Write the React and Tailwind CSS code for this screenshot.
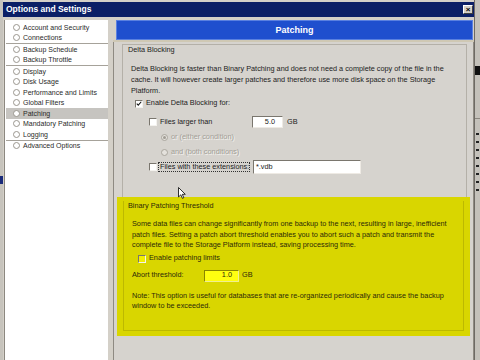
import React from "react";

const sideGroups = [
  ["Account and Security", "Connections"],
  ["Backup Schedule", "Backup Throttle"],
  ["Display", "Disk Usage", "Performance and Limits", "Global Filters", "Patching", "Mandatory Patching", "Logging"],
  ["Advanced Options"],
];

function Check({ checked, yellow }) {
  return (
    <span
      className={`relative inline-block w-[8px] h-[8px] shrink-0 border border-t-[#7a766e] border-l-[#7a766e] border-b-[#f4f2ee] border-r-[#f4f2ee] ${
        yellow ? "bg-[#f2f000]" : "bg-white"
      }`}
    >
      {checked && (
        <svg viewBox="0 0 8 8" className="absolute inset-0 w-full h-full">
          <path d="M1 3.5 L3 5.5 L7 1" fill="none" stroke="#111" strokeWidth="1.4" />
        </svg>
      )}
    </span>
  );
}

function Radio({ checked, dim }) {
  return (
    <span
      className={`relative inline-flex items-center justify-center w-[7px] h-[7px] shrink-0 rounded-full border ${
        dim ? "border-[#aaa69e] bg-[#e4e1dc]" : "border-[#9a968e] bg-white"
      }`}
    >
      {checked && <span className="w-[3px] h-[3px] rounded-full bg-[#a09c94]" />}
    </span>
  );
}

export default function App() {
  return (
    <div className="relative w-[480px] h-[360px] overflow-hidden flex bg-[#b9b6ae] font-['Liberation_Sans',Arial,sans-serif] text-[7px] text-[#1c1c1c]">
      {/* desktop left edge */}
      <div className="w-[3px] shrink-0 flex flex-col bg-[#c7c4bd]">
        <div className="h-[176px]" />
        <div className="h-[8px] bg-[#1a2a7a]" />
      </div>

      {/* dialog */}
      <div className="w-[471px] shrink-0 flex flex-col pt-[2px] bg-[#d4d0c8]">
        {/* title bar */}
        <div className="h-[15px] shrink-0 flex items-center justify-between pl-[3px] pr-[1px] bg-[#0b1f66]">
          <span className="text-white font-bold text-[8.5px] leading-none">Options and Settings</span>
          <span className="w-[10px] h-[9px] flex items-center justify-center bg-[#d4d0c8] border border-t-white border-l-white border-b-[#404040] border-r-[#404040] text-[8px] leading-none font-bold text-black">
            ×
          </span>
        </div>

        {/* body */}
        <div className="flex-1 flex pt-[3px]">
          {/* sidebar */}
          <div className="w-[104px] shrink-0 ml-[1px] bg-white border-l border-[#8c8880] pt-[2px] pl-[1px]">
            {sideGroups.map((group, gi) => (
              <div key={gi} className={gi < sideGroups.length - 1 ? "border-b border-[#a6a29a]" : ""}>
                {group.map((item) => (
                  <div
                    key={item}
                    className={`h-[10.5px] flex items-center gap-[3px] pl-[7px] leading-none ${
                      item === "Patching" ? "bg-[#c6c4c0]" : ""
                    }`}
                  >
                    <Radio />
                    <span className="text-[#2a2a2a]">{item}</span>
                  </div>
                ))}
              </div>
            ))}
          </div>

          {/* right side */}
          <div className="flex-1 flex flex-col ml-[5px] text-[7.3px]">
            <div className="h-[20px] shrink-0 ml-[3px] mr-[1px] flex items-center justify-center bg-[#1f4fce] border border-[#5a80e0]">
              <span className="text-white font-bold text-[9px] leading-none">Patching</span>
            </div>
            <div className="h-[2px] shrink-0 bg-[#cfc8b4]" />

            {/* content panel */}
            <div className="flex-1 flex flex-col border-l border-r border-[#8e8a82] bg-[#d6d3ce]">
              {/* Delta blocking group */}
              <div className="h-[153px] shrink-0 mt-[2px] ml-[8px] mr-[6px] flex flex-col border border-[#b4b0a8] border-b-0">
                <div className="h-[10px] pl-[5px] leading-[10px]">Delta Blocking</div>
                <p className="mt-[8px] pl-[8px] leading-[11px] whitespace-nowrap">
                  Delta Blocking is faster than Binary Patching and does not need a complete copy of the file in the
                  <br />
                  cache. It will however create larger patches and therefore use more disk space on the Storage
                  <br />
                  Platform.
                </p>
                <div className="h-[11px] mt-[2px] pl-[12px] flex items-center gap-[3px]">
                  <Check checked />
                  <span>Enable Delta Blocking for:</span>
                </div>
                <div className="h-[14px] mt-[6px] pl-[26px] flex items-center">
                  <Check />
                  <span className="ml-[3px] w-[92px]">Files larger than</span>
                  <span className="w-[31px] h-[12px] flex items-center justify-end pr-[7px] bg-white border border-t-[#7a766e] border-l-[#7a766e] border-b-[#eeeae4] border-r-[#eeeae4]">
                    5.0
                  </span>
                  <span className="ml-[4px]">GB</span>
                </div>
                <div className="h-[12px] mt-[2px] pl-[38px] flex items-center gap-[3px] text-[#a29e96] [text-shadow:1px_1px_0_#f4f2ee]">
                  <Radio checked dim />
                  <span>or (either condition)</span>
                </div>
                <div className="h-[12px] mt-[3px] pl-[38px] flex items-center gap-[3px] text-[#a29e96] [text-shadow:1px_1px_0_#f4f2ee]">
                  <Radio dim />
                  <span>and (both conditions)</span>
                </div>
                <div className="h-[14px] mt-[2px] pl-[26px] flex items-center">
                  <Check />
                  <span className="ml-[1px] w-[92px] h-[10px] flex items-center pl-[1px] whitespace-nowrap overflow-hidden border border-dotted border-[#303030]">
                    Files with these extensions:
                  </span>
                  <span className="ml-[3px] w-[108px] h-[14px] flex items-center pl-[2px] bg-white border border-t-[#7a766e] border-l-[#7a766e] border-b-[#eeeae4] border-r-[#eeeae4]">
                    *.vdb
                  </span>
                </div>
              </div>

              {/* Binary patching threshold (highlighted) */}
              <div className="h-[139px] shrink-0 ml-[3px] mr-[3px] pt-[4px] pl-[6px] pr-[6px] pb-[5px] bg-[#d9d600] text-[#2c2a08]">
                <div className="h-full flex flex-col border-l border-b border-r border-[#bdb900]">
                  <div className="h-[10px] pl-[4px] leading-[10px]">Binary Patching Threshold</div>
                  <p className="mt-[8px] pl-[8px] leading-[10.5px] whitespace-nowrap">
                    Some data files can change significantly from one backup to the next, resulting in large, inefficient
                    <br />
                    patch files. Setting a patch abort threshold enables you to abort such a patch and transmit the
                    <br />
                    complete file to the Storage Platform instead, saving processing time.
                  </p>
                  <div className="h-[10px] mt-[3px] pl-[14px] flex items-center gap-[3px]">
                    <Check yellow />
                    <span>Enable patching limits</span>
                  </div>
                  <div className="h-[12px] mt-[6px] pl-[8px] flex items-center">
                    <span className="w-[72px]">Abort threshold:</span>
                    <span className="w-[35px] h-[12px] flex items-center justify-end pr-[6px] bg-[#ffff10] border border-t-[#8a8600] border-l-[#8a8600] border-b-[#f0ee90] border-r-[#f0ee90]">
                      1.0
                    </span>
                    <span className="ml-[3px]">GB</span>
                  </div>
                  <p className="mt-[9px] pl-[8px] leading-[10px] whitespace-nowrap">
                    Note: This option is useful for databases that are re-organized periodically and cause the backup
                    <br />
                    window to be exceeded.
                  </p>
                </div>
              </div>
            </div>
          </div>
        </div>
      </div>

      {/* desktop right edge */}
      <div className="flex-1 flex flex-col bg-[#c4c1ba] border-l border-[#6e6a64]">
        <div className="h-[66px]" />
        <div className="h-[9px] bg-[#101010]" />
        <div className="h-[44px] border-b border-[#8a867e]" />
        <div className="mt-[14px] flex flex-col gap-[6px] pl-[1px]">
          {[0, 1, 2, 3, 4, 5, 6, 7].map((i) => (
            <div key={i} className="w-[3px] h-[2px] bg-[#222]" />
          ))}
        </div>
      </div>

      {/* mouse pointer */}
      <svg className="absolute left-[178px] top-[187px]" width="8" height="12" viewBox="0 0 8 12">
        <path d="M0.5 0.5 L0.5 10 L2.8 7.8 L4.4 11.3 L5.8 10.7 L4.3 7.3 L7.3 7.3 Z" fill="#fff" stroke="#000" strokeWidth="0.8" />
      </svg>
    </div>
  );
}
